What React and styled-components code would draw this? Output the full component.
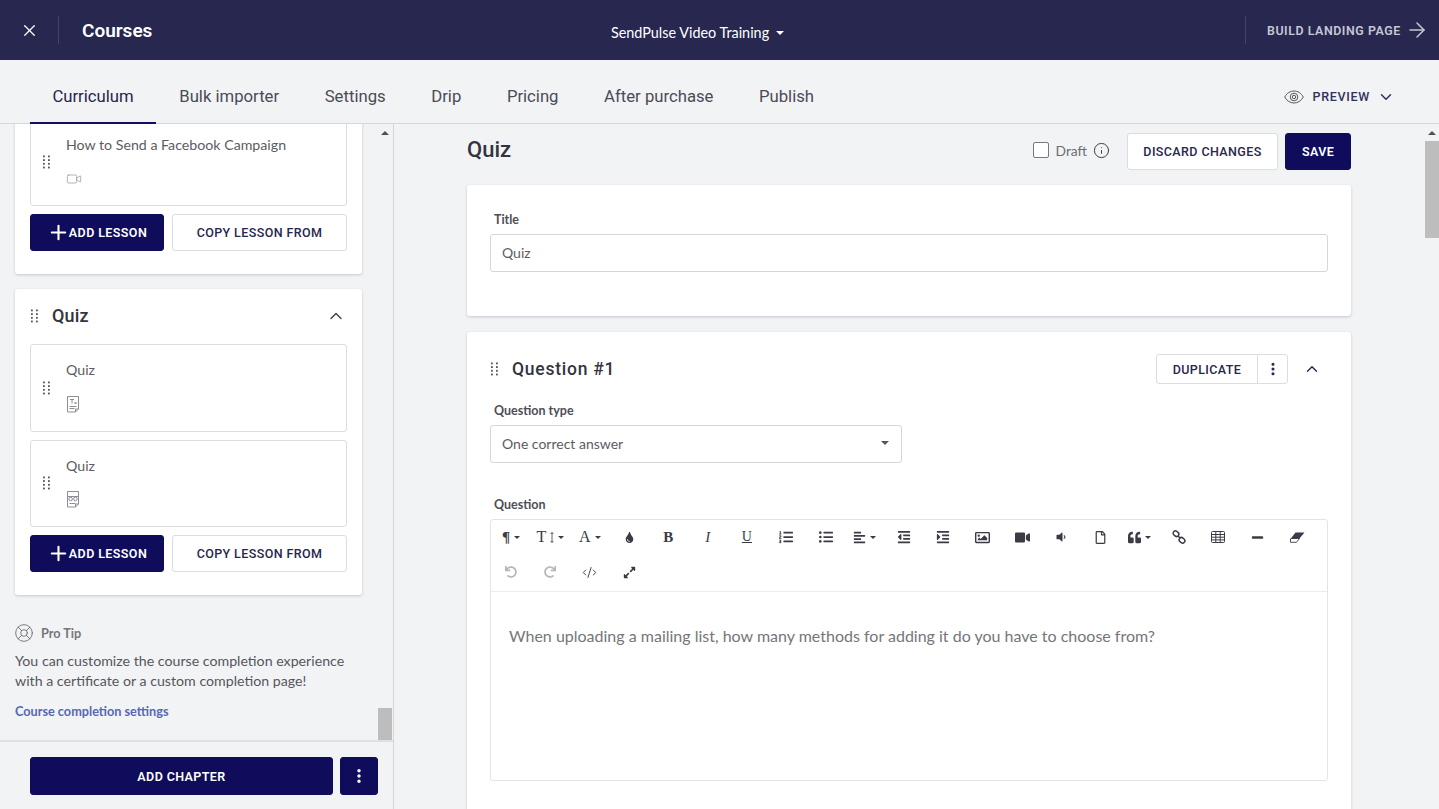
import React from "react";
import styled, { createGlobalStyle } from "styled-components";
import { X, ArrowRight, ChevronDown, ChevronUp, Info, Plus, EllipsisVertical, LifeBuoy, Video, CodeXml } from "lucide-react";
import {
  FaTint, FaListOl, FaListUl, FaAlignLeft, FaOutdent, FaIndent, FaRegImage, FaVideo,
  FaVolumeDown, FaRegFile, FaQuoteLeft, FaMinus, FaUndo, FaRedo, FaExpandAlt,
} from "react-icons/fa";

const heading = `Roboto, "Liberation Sans", sans-serif`;
const body = `Lato, "Open Sans", sans-serif`;

const Global = createGlobalStyle`
  html, body { margin: 0; height: 100%; overflow: hidden; }
  #root { height: 100%; }
  * { box-sizing: border-box; }
  body { font-family: ${body}; background: #f2f3f5; color: #55565d; }
`;

const Page = styled.div`
  height: 809px;
  display: flex;
  flex-direction: column;
`;
const Header = styled.header`
  height: 60px;
  flex: none;
  background: #27274f;
  color: #fff;
  display: grid;
  grid-template-columns: 1fr auto 1fr;
  align-items: center;
`;
const HeaderLeft = styled.div`
  display: flex;
  align-items: center;
  height: 28px;
`;
const CloseBox = styled.div`
  width: 59px;
  height: 28px;
  display: flex;
  align-items: center;
  justify-content: center;
  border-right: 1px solid #44446a;
`;
const HeaderTitle = styled.div`
  font: 600 19px ${heading};
  margin-left: 23px;
`;
const CourseSelect = styled.div`
  display: flex;
  align-items: center;
  gap: 7px;
  font: 400 14.4px ${body};
  padding-top: 5px;
  margin-left: -44px;
`;
const Caret = styled.span`
  width: 0;
  height: 0;
  border-left: ${(p) => p.$size || 4}px solid transparent;
  border-right: ${(p) => p.$size || 4}px solid transparent;
  border-top: ${(p) => p.$size || 4}px solid ${(p) => p.$color || "currentColor"};
`;
const HeaderRight = styled.div`
  justify-self: end;
  height: 28px;
  width: 194px;
  border-left: 1px solid #44446a;
  display: flex;
  align-items: center;
  gap: 4px;
  padding-left: 21px;
  color: #c6c7d6;
  font: 600 12.4px ${heading};
  letter-spacing: 0.55px;
  white-space: nowrap;
`;
const TabBar = styled.nav`
  height: 64px;
  flex: none;
  display: flex;
  align-items: stretch;
  padding: 0 44px 0 29.6px;
  border-bottom: 1px solid #d5d6da;
`;
const Tab = styled.div`
  padding: 9px 22.8px 0;
  display: flex;
  align-items: center;
  font: 400 16.7px ${heading};
  color: ${(p) => (p.$active ? "#25254d" : "#4a4b55")};
  box-shadow: ${(p) => (p.$active ? "inset 0 -2px 0 #11105c" : "none")};
  height: 64px;
`;
const Preview = styled.div`
  margin-left: auto;
  display: flex;
  align-items: center;
  color: #30315a;
  font: 500 12.5px ${heading};
  letter-spacing: 0.7px;
  gap: 9px;
  padding-top: 10px;
`;
const Body = styled.div`
  flex: 1;
  min-height: 0;
  display: flex;
`;
const Sidebar = styled.aside`
  width: 394px;
  flex: none;
  border-right: 1px solid #d5d6da;
  display: flex;
  flex-direction: column;
  min-height: 0;
`;
const SideScroll = styled.div`
  position: relative;
  height: 618px;
  flex: none;
  overflow: hidden;
  border-bottom: 2px solid #dfe0e3;
`;
const SideContent = styled.div`
  width: 378px;
  padding: 0 16px 0 15px;
  margin-top: -20.5px;
  display: flex;
  flex-direction: column;
  gap: 15px;
`;
const Chapter = styled.section`
  background: #fff;
  border-radius: 3px;
  box-shadow: 0 1px 3px rgba(30, 30, 60, 0.2);
  padding: 15px 15px 23px;
  display: flex;
  flex-direction: column;
  gap: 8px;
`;
const ChapterHead = styled.div`
  height: 32px;
  margin: -4px 0 4px;
  display: flex;
  align-items: center;
  color: #3a3b45;
`;
const ChapterTitle = styled.h3`
  margin: 0 0 0 14px;
  flex: 1;
  font: 500 18px ${heading};
  letter-spacing: 0.2px;
  color: #33343f;
  padding-bottom: 1px;
`;
const Lesson = styled.div`
  height: 87.5px;
  border: 1px solid #dcdde0;
  border-radius: 3px;
  display: flex;
  align-items: center;
  padding-left: 11px;
`;
const LessonBody = styled.div`
  margin-left: 16px;
  display: flex;
  flex-direction: column;
  gap: 15px;
  padding-bottom: 2px;
`;
const LessonName = styled.div`
  font-size: 14.2px;
  line-height: 20px;
  color: #5b5c63;
`;
const IconSlot = styled.div`
  height: 18px;
  display: flex;
  align-items: center;
  color: #8d8e94;
`;
const ButtonRow = styled.div`
  display: flex;
  gap: 8px;
`;
const Button = styled.button`
  height: ${(p) => p.$h || 37}px;
  width: ${(p) => (p.$w ? `${p.$w}px` : "auto")};
  flex: ${(p) => (p.$grow ? 1 : "none")};
  padding: 0;
  border-radius: 3px;
  display: flex;
  align-items: center;
  justify-content: center;
  font: ${(p) => (p.$primary ? 600 : 500)} 12.5px ${heading};
  letter-spacing: 0.4px;
  border: 1px solid ${(p) => (p.$primary ? "#0e0c5b" : "#dcdde0")};
  background: ${(p) => (p.$primary ? "#0e0c5b" : "#fff")};
  color: ${(p) => (p.$primary ? "#fff" : "#26264f")};
`;
const ProTip = styled.div`
  padding-top: 14px;
  font-size: 14.2px;
  line-height: 20px;
  color: #55565d;
`;
const TipHead = styled.div`
  display: flex;
  align-items: center;
  gap: 7px;
  height: 18px;
  margin-left: -1px;
  font-size: 12.7px;
  font-weight: 700;
  color: #75767d;
  margin-bottom: 9px;
`;
const TipLink = styled.div`
  margin-top: 10px;
  font-size: 12.7px;
  font-weight: 700;
  color: #5468b4;
`;
const SideFooter = styled.div`
  padding: 15px 15px 0 30px;
  display: flex;
  gap: 7px;
`;
const Main = styled.main`
  position: relative;
  flex: 1;
  min-width: 0;
  overflow: hidden;
  padding: 9px 0 0 73px;
`;
const Column = styled.div`
  width: 884px;
  display: flex;
  flex-direction: column;
`;
const TopRow = styled.div`
  height: 37px;
  display: flex;
  align-items: center;
  margin-bottom: 15px;
`;
const PageTitle = styled.h1`
  margin: 0 auto 0 0;
  font: 500 22px ${heading};
  color: #33343f;
  padding-bottom: 5px;
`;
const DraftGroup = styled.div`
  display: flex;
  align-items: center;
  margin: 0 17px 3px 0;
`;
const DraftBox = styled.span`
  width: 16px;
  height: 16px;
  border: 1px solid #77787e;
  border-radius: 2px;
  background: #fff;
  margin-right: 7px;
`;
const DraftText = styled.span`
  font-size: 13.8px;
  color: #6b6c72;
  margin-right: 6px;
`;
const Panel = styled.section`
  background: #fff;
  border-radius: 3px;
  box-shadow: 0 1px 3px rgba(30, 30, 60, 0.2);
  padding: ${(p) => p.$pad};
  margin-bottom: 16px;
`;
const Label = styled.div`
  font-size: 12.5px;
  font-weight: 700;
  line-height: 16px;
  color: #4d4e56;
  padding: 1px 0 0 4px;
  margin-bottom: 6px;
  margin-top: ${(p) => p.$top || 0}px;
`;
const Field = styled.div`
  height: 38px;
  width: ${(p) => p.$w || "100%"};
  border: 1px solid #d5d6da;
  border-radius: 3px;
  padding: 0 12px 2px 11px;
  display: flex;
  align-items: center;
  justify-content: space-between;
  font-size: 14px;
  color: #5b5c63;
`;
const QuestionHead = styled.div`
  height: 30px;
  display: flex;
  align-items: center;
  margin-bottom: 18px;
  color: #3a3b45;
`;
const QuestionTitle = styled.h2`
  margin: 0 auto 0 14px;
  font: 500 17.5px ${heading};
  letter-spacing: 0.75px;
  color: #33343f;
`;
const SplitButton = styled.div`
  height: 30px;
  display: flex;
  border: 1px solid #dcdde0;
  border-radius: 3px;
  color: #26264f;
  font: 500 12.5px ${heading};
  letter-spacing: 0.4px;
  margin-right: 15px;
`;
const SplitPart = styled.div`
  width: ${(p) => p.$w}px;
  display: flex;
  align-items: center;
  justify-content: center;
  & + & { border-left: 1px solid #dcdde0; }
`;
const CollapseIcon = styled.div`
  width: 18px;
  margin-right: 7px;
  display: flex;
  color: #26264f;
`;
const Editor = styled.div`
  height: 262px;
  border: 1px solid #e3e4e7;
  border-radius: 3px;
`;
const Toolbar = styled.div`
  height: 73px;
  border-bottom: 1px solid #ebecee;
  padding: 0 0 0 0.5px;
`;
const ToolRow = styled.div`
  height: 36px;
  margin-top: -1px;
  display: flex;
  align-items: center;
`;
const Tool = styled.div`
  width: 39.3px;
  flex: none;
  display: flex;
  align-items: center;
  justify-content: center;
  gap: 4px;
  color: ${(p) => (p.$muted ? "#b5b6ba" : "#3a3b45")};
`;
const SerifGlyph = styled.span`
  font: ${(p) => (p.$italic ? "italic " : "")}${(p) => (p.$light ? 400 : 700)} ${(p) => p.$size || 15}px "Liberation Serif", serif;
  line-height: 16px;
  text-decoration: ${(p) => (p.$under ? "underline" : "none")};
`;
const EditorText = styled.div`
  padding: 34px 18px;
  font-size: 16px;
  line-height: 20px;
  color: #75767a;
`;
const Scrollbar = styled.div`
  position: absolute;
  top: 0;
  right: ${(p) => p.$right || 0}px;
  bottom: 0;
  width: 14px;
  background: #f2f3f5;
`;
const ScrollUp = styled.span`
  position: absolute;
  top: 7px;
  left: 3px;
  width: 0;
  height: 0;
  border-left: 4px solid transparent;
  border-right: 4px solid transparent;
  border-bottom: 4px solid #505050;
`;
const Thumb = styled.div`
  position: absolute;
  left: 0;
  right: 0;
  top: ${(p) => p.$top}px;
  height: ${(p) => p.$h}px;
  background: #bdbdbd;
`;

const Grip = () => (
  <svg width="8" height="14" viewBox="0 0 8 14" fill="#55565d">
    {[0.5, 4.2, 7.9, 11.6].map((y) =>
      [1, 6].map((x) => <rect key={`${x}${y}`} x={x} y={y} width="1.8" height="1.8" />)
    )}
  </svg>
);

const EyeIcon = () => (
  <svg width="20" height="14" viewBox="0 0 20 14" fill="none" stroke="#55565d" strokeWidth="1">
    <path d="M.7 7C3 3 6.3 1 10 1s7 2 9.3 6c-2.3 4-5.6 6-9.3 6S3 11 .7 7z" />
    <circle cx="10" cy="7" r="3.8" />
    <circle cx="10" cy="7" r="1.7" />
  </svg>
);

const DocIcon = ({ kind }) => (
  <svg width="14" height="17" viewBox="0 0 14 17" fill="none" stroke="#8d8e94" strokeWidth="1">
    <path d="M1.5 .5h11v12.5l-3 3h-8z M12.5 13h-3v3" />
    {kind === "text" ? (
      <>
        <path d="M4 3.5h4M6 3.5v4" />
        <path d="M8.5 6l2 2M10.5 6l-2 2M3.5 10.5h7M3.5 12.5h5" />
      </>
    ) : (
      <>
        <path d="M1.5 5.5h11" />
        <circle cx="4.6" cy="8" r="1.8" />
        <circle cx="9.4" cy="8" r="1.8" />
        <path d="M3.5 12.5h6" />
      </>
    )}
  </svg>
);

const HeightArrow = () => (
  <svg width="4" height="11" viewBox="0 0 4 11" fill="none" stroke="#3a3b45" strokeWidth=".8">
    <path d="M2 .5v10M.6 2L2 .5 3.4 2M.6 9L2 10.5 3.4 9" />
  </svg>
);

const ChainIcon = () => (
  <svg width="14" height="14" viewBox="0 0 14 14" fill="none" stroke="#3a3b45" strokeWidth="1.5">
    <rect x="1" y="1.4" width="6" height="4.6" rx="2.3" transform="rotate(40 4 3.7)" />
    <rect x="7" y="8" width="6" height="4.6" rx="2.3" transform="rotate(40 10 10.3)" />
    <path d="M6 6l2 2" />
  </svg>
);

const GridIcon = () => (
  <svg width="14" height="12" viewBox="0 0 14 12" fill="none" stroke="#3a3b45" strokeWidth="1">
    <rect x=".5" y=".5" width="13" height="11" rx="1" />
    <path d="M.5 3.5h13M.5 6.2h13M.5 8.9h13M4.8 .5v11M9.2 .5v11" />
  </svg>
);

const EraserIcon = () => (
  <svg width="15" height="11" viewBox="0 0 15 11">
    <path d="M5.5 .5H14.5L9.5 6.5H.8z" fill="#3a3b45" />
    <path d="M.8 6.5H9.5L6.5 10.3H.5L.5 7z" fill="none" stroke="#3a3b45" strokeWidth=".9" />
  </svg>
);

const LessonCard = ({ name, icon }) => (
  <Lesson>
    <Grip />
    <LessonBody>
      <LessonName>{name}</LessonName>
      <IconSlot>{icon}</IconSlot>
    </LessonBody>
  </Lesson>
);

const LessonButtons = () => (
  <ButtonRow>
    <Button $primary $w={134}>
      <Plus size={23} strokeWidth={2.2} style={{ marginRight: -1 }} />
      ADD LESSON
    </Button>
    <Button $grow>COPY LESSON FROM</Button>
  </ButtonRow>
);

const tabs = ["Curriculum", "Bulk importer", "Settings", "Drip", "Pricing", "After purchase", "Publish"];

const toolsTop = [
  { icon: <SerifGlyph $size={15}>¶</SerifGlyph>, caret: true },
  { icon: <><SerifGlyph $size={16} $light>T</SerifGlyph><HeightArrow /></>, caret: true },
  { icon: <SerifGlyph $size={16} $light>A</SerifGlyph>, caret: true },
  { icon: <FaTint size={11} /> },
  { icon: <SerifGlyph $size={15}>B</SerifGlyph> },
  { icon: <SerifGlyph $size={15} $italic $light>I</SerifGlyph> },
  { icon: <SerifGlyph $size={14} $light $under>U</SerifGlyph> },
  { icon: <FaListOl size={14} /> },
  { icon: <FaListUl size={14} /> },
  { icon: <FaAlignLeft size={13} />, caret: true },
  { icon: <FaOutdent size={14} /> },
  { icon: <FaIndent size={14} /> },
  { icon: <FaRegImage size={15} /> },
  { icon: <FaVideo size={15} /> },
  { icon: <FaVolumeDown size={12} /> },
  { icon: <FaRegFile size={13} /> },
  { icon: <FaQuoteLeft size={13} />, caret: true },
  { icon: <ChainIcon /> },
  { icon: <GridIcon /> },
  { icon: <FaMinus size={13} /> },
  { icon: <EraserIcon /> },
];

const toolsBottom = [
  { icon: <FaUndo size={12} />, muted: true },
  { icon: <FaRedo size={12} />, muted: true },
  { icon: <CodeXml size={15} strokeWidth={1.5} /> },
  { icon: <FaExpandAlt size={13} /> },
];

export default function App() {
  return (
    <Page>
      <Global />
      <Header>
        <HeaderLeft>
          <CloseBox>
            <X size={19} strokeWidth={1.6} />
          </CloseBox>
          <HeaderTitle>Courses</HeaderTitle>
        </HeaderLeft>
        <CourseSelect>
          SendPulse Video Training <Caret />
        </CourseSelect>
        <HeaderRight>
          BUILD LANDING PAGE
          <ArrowRight size={24} strokeWidth={1.5} style={{ flex: "none" }} />
        </HeaderRight>
      </Header>
      <TabBar>
        {tabs.map((t, i) => (
          <Tab key={t} $active={i === 0}>
            {t}
          </Tab>
        ))}
        <Preview>
          <EyeIcon />
          PREVIEW
          <ChevronDown size={18} strokeWidth={2} style={{ marginLeft: -2 }} />
        </Preview>
      </TabBar>
      <Body>
        <Sidebar>
          <SideScroll>
            <SideContent>
              <Chapter>
                <LessonCard
                  name="How to Send a Facebook Campaign"
                  icon={<Video size={16} strokeWidth={1} />}
                />
                <LessonButtons />
              </Chapter>
              <Chapter>
                <ChapterHead>
                  <Grip />
                  <ChapterTitle>Quiz</ChapterTitle>
                  <ChevronUp size={20} strokeWidth={1.6} style={{ marginRight: 1 }} />
                </ChapterHead>
                <LessonCard name="Quiz" icon={<DocIcon kind="text" />} />
                <LessonCard name="Quiz" icon={<DocIcon kind="choice" />} />
                <LessonButtons />
              </Chapter>
              <ProTip>
                <TipHead>
                  <LifeBuoy size={20} strokeWidth={1} color="#66676d" />
                  Pro Tip
                </TipHead>
                You can customize the course completion experience with a certificate or a custom
                completion page!
                <TipLink>Course completion settings</TipLink>
              </ProTip>
            </SideContent>
            <Scrollbar $right={1}>
              <ScrollUp />
              <Thumb $top={584} $h={33} />
            </Scrollbar>
          </SideScroll>
          <SideFooter>
            <Button $primary $h={38} $grow>
              ADD CHAPTER
            </Button>
            <Button $primary $h={38} $w={38}>
              <EllipsisVertical size={18} strokeWidth={2.6} />
            </Button>
          </SideFooter>
        </Sidebar>
        <Main>
          <Column>
            <TopRow>
              <PageTitle>Quiz</PageTitle>
              <DraftGroup>
                <DraftBox />
                <DraftText>Draft</DraftText>
                <Info size={17} strokeWidth={1.4} color="#3a3b45" />
              </DraftGroup>
              <Button $w={151} style={{ marginRight: 7 }}>
                DISCARD CHANGES
              </Button>
              <Button $primary $w={66}>
                SAVE
              </Button>
            </TopRow>
            <Panel $pad="26px 23px 44px">
              <Label>Title</Label>
              <Field>Quiz</Field>
            </Panel>
            <Panel $pad="22px 23px 30px">
              <QuestionHead>
                <Grip />
                <QuestionTitle>Question #1</QuestionTitle>
                <SplitButton>
                  <SplitPart $w={100}>DUPLICATE</SplitPart>
                  <SplitPart $w={30}>
                    <EllipsisVertical size={16} strokeWidth={2.6} />
                  </SplitPart>
                </SplitButton>
                <CollapseIcon>
                  <ChevronUp size={18} strokeWidth={1.8} />
                </CollapseIcon>
              </QuestionHead>
              <Label>Question type</Label>
              <Field $w="412px">
                One correct answer
                <Caret $size={4} $color="#55565d" />
              </Field>
              <Label $top={33}>Question</Label>
              <Editor>
                <Toolbar>
                  <ToolRow>
                    {toolsTop.map((t, i) => (
                      <Tool key={i}>
                        {t.icon}
                        {t.caret && <Caret $size={3.5} />}
                      </Tool>
                    ))}
                  </ToolRow>
                  <ToolRow>
                    {toolsBottom.map((t, i) => (
                      <Tool key={i} $muted={t.muted}>
                        {t.icon}
                      </Tool>
                    ))}
                  </ToolRow>
                </Toolbar>
                <EditorText>
                  When uploading a mailing list, how many methods for adding it do you have to choose from?
                </EditorText>
              </Editor>
            </Panel>
          </Column>
          <Scrollbar>
            <ScrollUp />
            <Thumb $top={17} $h={97} />
          </Scrollbar>
        </Main>
      </Body>
    </Page>
  );
}
